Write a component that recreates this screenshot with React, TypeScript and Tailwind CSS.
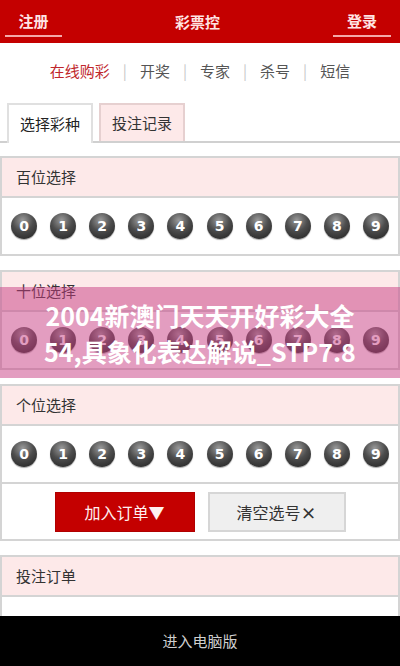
import React from "react";

const digits = [0, 1, 2, 3, 4, 5, 6, 7, 8, 9];
const navItems = ["在线购彩", "开奖", "专家", "杀号", "短信"];

const Ball = ({ n }: { n: number }) => (
  <span
    className="flex h-[26px] w-[26px] items-center justify-center rounded-full text-[14px] font-bold text-white shadow-[0_1px_1px_rgba(0,0,0,0.35)]"
    style={{
      background: "radial-gradient(circle at 45% 28%, #9a9a9a 0%, #4d4d4d 45%, #1e1e1e 100%)",
      fontFamily: '"DejaVu Sans", sans-serif',
    }}
  >
    {n}
  </span>
);

const PanelHead = ({ title }: { title: string }) => (
  <div className="flex h-[40px] items-center border-b-2 border-[#d4d4d4] bg-[#fde9e9] pl-[14px] text-[15px] text-[#333]">
    {title}
  </div>
);

const BallRow = () => (
  <div className="flex h-[56px] items-center justify-between px-[9px]">
    {digits.map((d) => (
      <Ball key={d} n={d} />
    ))}
  </div>
);

export default function App() {
  return (
    <div
      className="relative flex h-[666px] w-[400px] flex-col overflow-hidden bg-white"
      style={{ fontFamily: '"Noto Sans CJK SC", "Noto Sans", sans-serif' }}
    >
      {/* header */}
      <div className="flex h-[43px] shrink-0 items-end justify-between bg-[#c40000] px-[5px] pb-[6px]">
        <div className="flex w-[57px] flex-col items-center">
          <span className="text-[15px] font-bold leading-none text-[#ffe4e4]">注册</span>
          <span className="mt-[7px] block h-[2px] w-[57px] bg-[#f4a9a9]" />
        </div>
        <span className="mb-[8px] text-[15px] font-bold leading-none text-[#ffe4e4]">彩票控</span>
        <div className="mr-[4px] flex w-[58px] flex-col items-center">
          <span className="text-[15px] font-bold leading-none text-[#ffe4e4]">登录</span>
          <span className="mt-[7px] block h-[2px] w-[58px] bg-[#f4a9a9]" />
        </div>
      </div>

      {/* nav */}
      <div className="flex h-[56px] shrink-0 items-center justify-center text-[15px] text-[#555]">
        {navItems.map((item, i) => (
          <React.Fragment key={item}>
            {i > 0 && <span className="mx-[13px] text-[#c8c8c8]">|</span>}
            <span className={i === 0 ? "text-[#c0262b]" : ""}>{item}</span>
          </React.Fragment>
        ))}
      </div>

      {/* tabs */}
      <div className="mt-[6px] flex h-[38px] shrink-0 items-end gap-[6px] border-b-2 border-[#d0d0d0] pl-[7px]">
        <div className="-mb-[2px] flex h-[40px] w-[86px] items-center justify-center border-2 border-b-0 border-[#e0e0e0] bg-white text-[15px] text-[#222]">
          选择彩种
        </div>
        <div className="flex h-[38px] w-[86px] items-center justify-center border-2 border-b-0 border-[#e6d0d0] bg-[#fde9e9] text-[15px] text-[#333]">
          投注记录
        </div>
      </div>

      {/* panels */}
      <div className="flex flex-1 flex-col gap-[14px] overflow-hidden pt-[13px]">
        <div className="border-2 border-[#d4d4d4]">
          <PanelHead title="百位选择" />
          <BallRow />
        </div>
        <div className="border-2 border-[#d4d4d4]">
          <PanelHead title="十位选择" />
          <BallRow />
        </div>
        <div className="border-2 border-[#d4d4d4]">
          <PanelHead title="个位选择" />
          <BallRow />
          <div className="flex h-[57px] items-center justify-center gap-[13px] border-t-2 border-[#d4d4d4]">
            <button className="h-[40px] w-[140px] border border-[#b00000] bg-[#c40000] text-[16px] text-[#fff0f0]">
              加入订单▼
            </button>
            <button className="h-[40px] w-[138px] border-2 border-[#d6d6d6] bg-[#efefef] text-[16px] text-[#333]">
              清空选号<span className="font-bold">×</span>
            </button>
          </div>
        </div>
        <div className="border-2 border-[#d4d4d4]">
          <PanelHead title="投注订单" />
          <div className="h-[40px]" />
        </div>
      </div>

      {/* footer */}
      <div className="flex h-[50px] shrink-0 items-center justify-center bg-black text-[15px] text-[#cfcfcf]">
        进入电脑版
      </div>

      {/* overlay banner */}
      <div className="absolute left-0 top-[287px] flex h-[91px] w-[400px] flex-col items-center justify-center bg-[rgba(200,60,130,0.5)] text-[25px] font-bold leading-[36px] text-white">
        <span>2004新澳门天天开好彩大全</span>
        <span>54,具象化表达解说_STP7.8</span>
      </div>
    </div>
  );
}
